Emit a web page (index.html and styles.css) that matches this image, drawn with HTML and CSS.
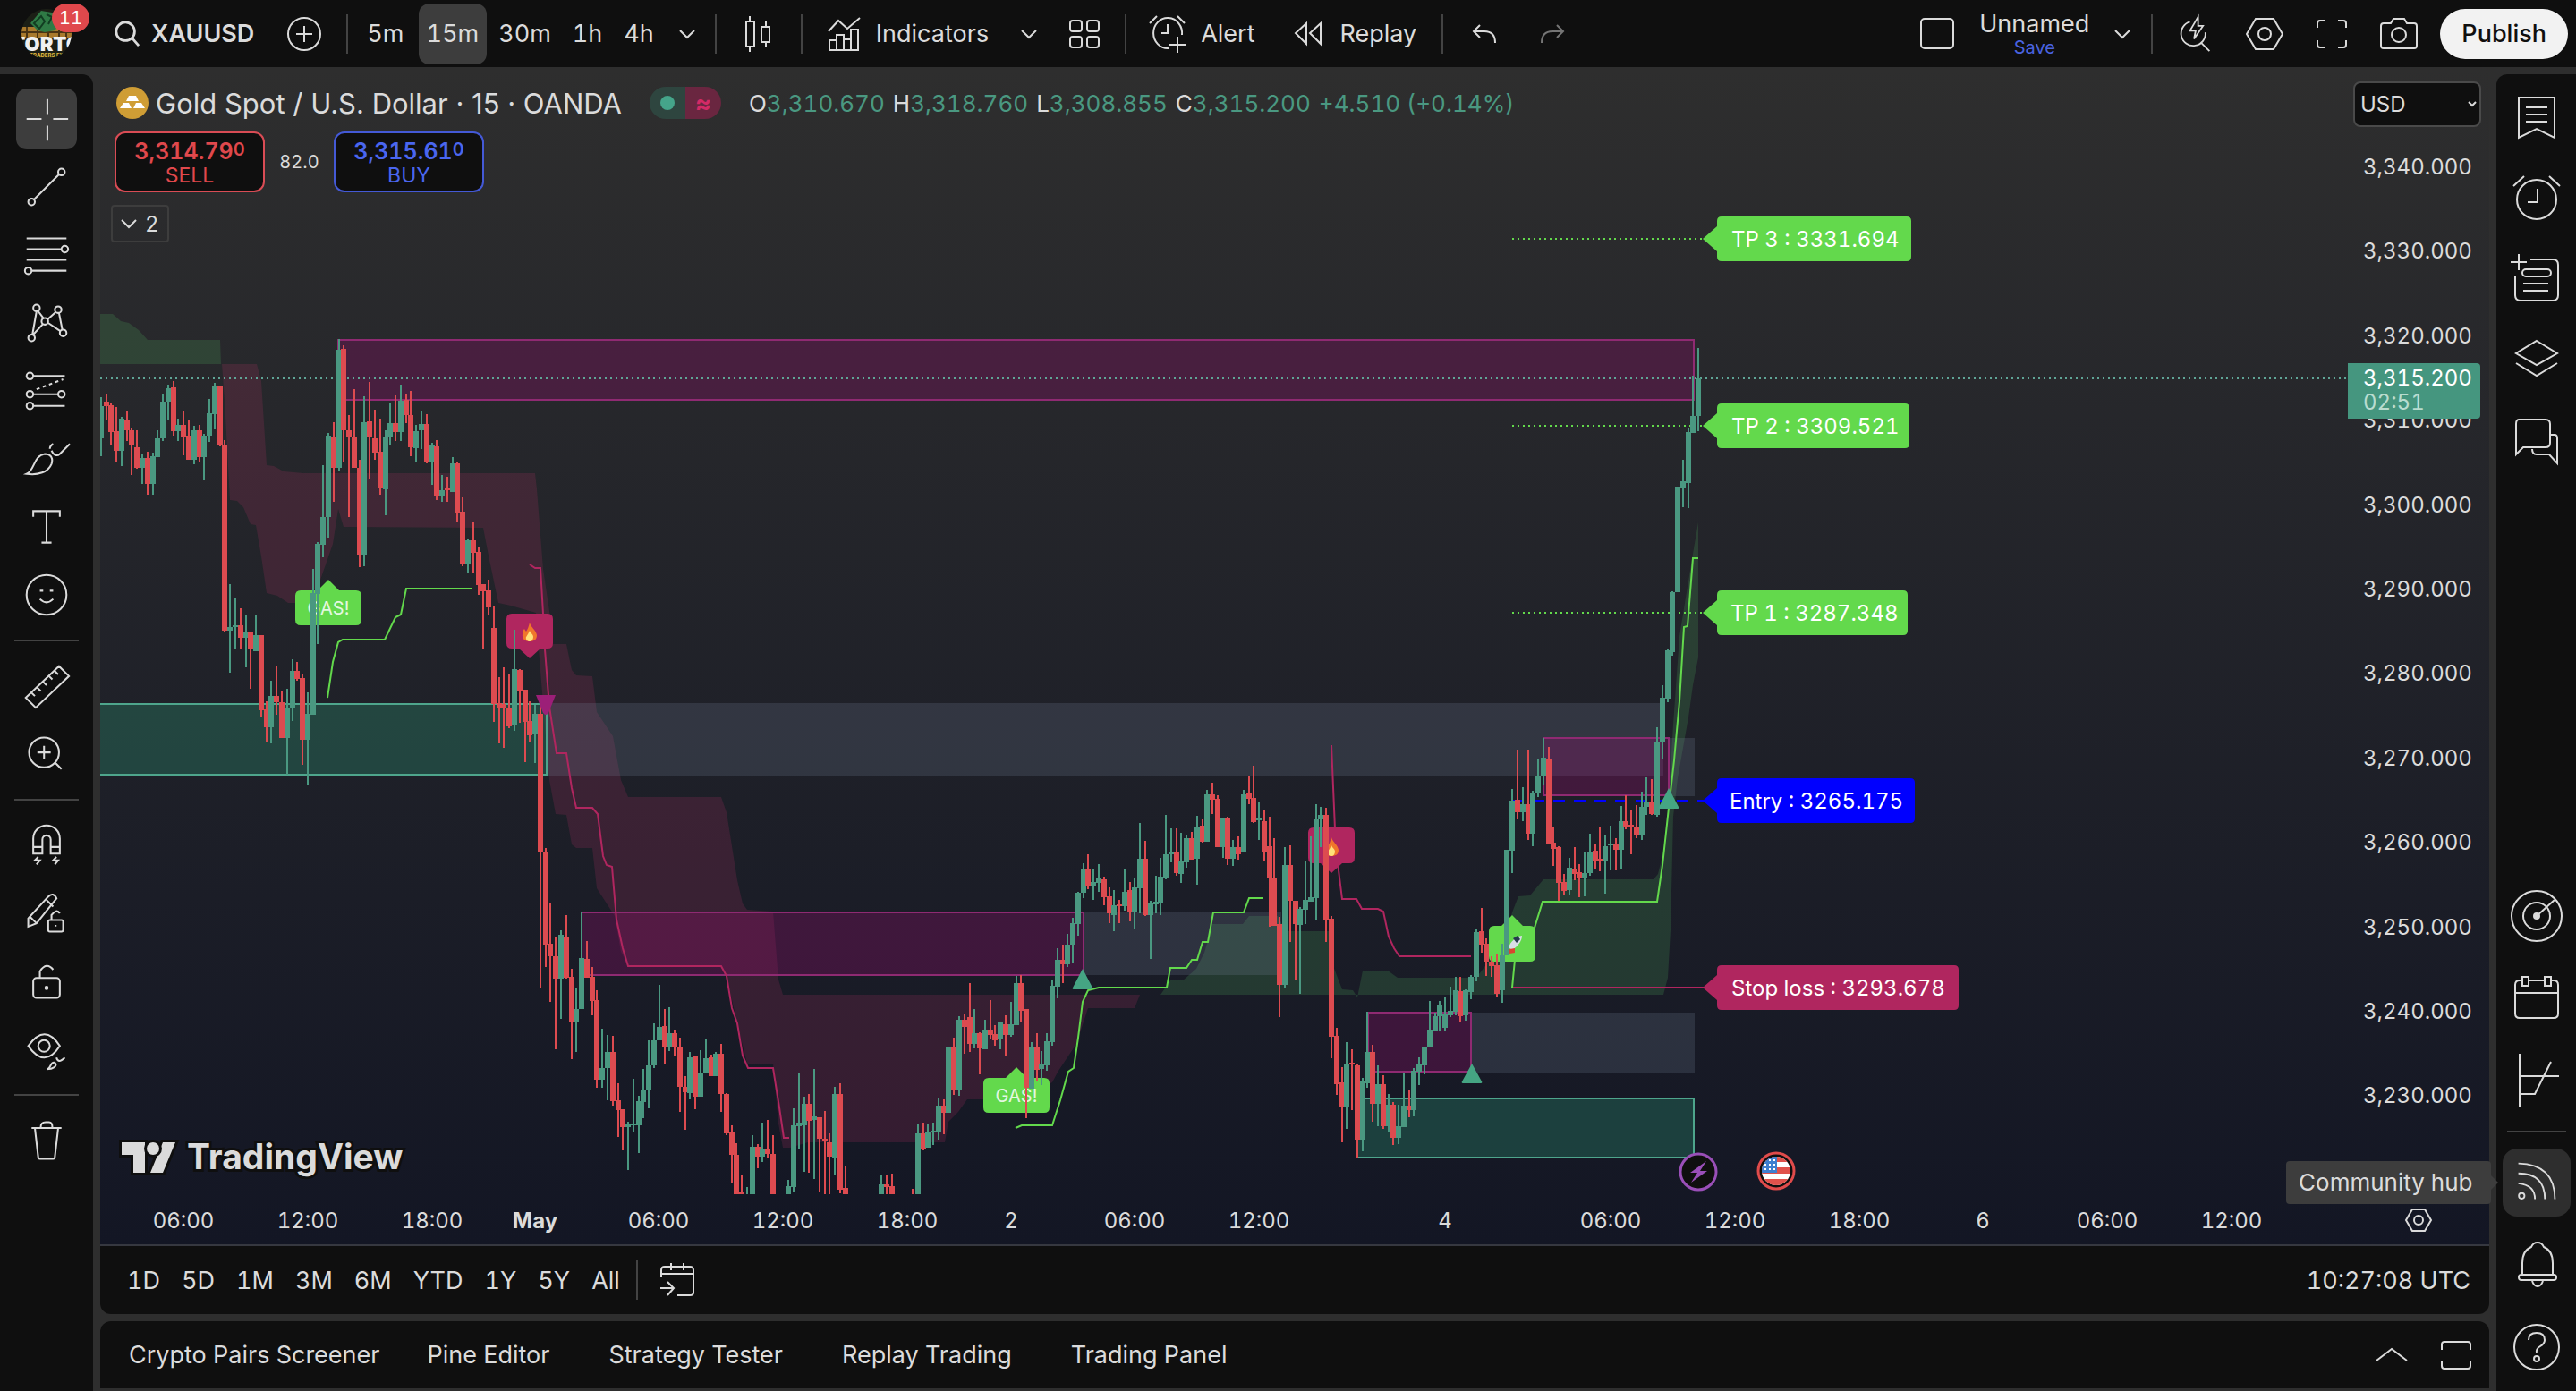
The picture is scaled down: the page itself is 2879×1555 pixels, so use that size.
FILE: index.html
```html
<!DOCTYPE html>
<html lang="en">
<head>
    <meta charset="UTF-8">
    <meta name="viewport" content="width=device-width, initial-scale=1.0">
    <title>XAUUSD 3,315.200</title>
    <link rel="stylesheet" href="styles.css">
</head>
<body>
    <header class="topbar">
        <button class="avatar" aria-label="Profile">
            <svg viewBox="0 0 56 56" class="avatarImg">
                <clipPath id="avatarClip"><circle cx="28" cy="28" r="28"/></clipPath>
                <g clip-path="url(#avatarClip)">
                    <rect width="56" height="56" fill="#1c1f16"/>
                    <path d="M0 20h56v12H0z" fill="#a8792c"/>
                    <path d="M6 20v14M18 20v14M30 20v14M42 20v14M50 20v14M0 26h56" stroke="#4a3414" stroke-width="2"/>
                    <path d="M10 16L22 2l12 2 8 8-4 12-12 2-8-2z" fill="#2f7a45"/>
                    <path d="M14 16l8-8 4 6-6 8zM28 6l6 3-4 8" fill="none" stroke="#123d22" stroke-width="2"/>
                    <text x="28" y="47" class="avatarName">TORTO</text>
                    <text x="28" y="54" class="avatarSub">TRADERS FX</text>
                </g>
            </svg>
            <span class="badge">11</span>
        </button>
        <button class="symbol">
            <svg class="icon28" viewBox="0 0 28 30"><circle cx="12" cy="12" r="11"/><path d="M20 20l8 9"/></svg>
            XAUUSD
        </button>
        <button class="addSymbol" aria-label="Compare">
            <svg class="icon38" viewBox="0 0 38 38"><circle cx="19" cy="19" r="18"/><path d="M19 10v18M10 19h18"/></svg>
        </button>
        <i class="sep"></i>
        <nav class="intervals">
            <button>5m</button>
            <button class="active">15m</button>
            <button>30m</button>
            <button>1h</button>
            <button>4h</button>
            <button class="chev" aria-label="More intervals"><svg class="icon18" viewBox="0 0 18 18"><path d="M1 5l8 8 8-8"/></svg></button>
        </nav>
        <i class="sep"></i>
        <button class="tb candlesBtn" aria-label="Candles">
            <svg class="icon40" viewBox="0 0 40 40"><path d="M6 6h9v28H6zM10 0v6M10 34v6M23 12h9v17h-9zM28 6v6M28 29v6"/></svg>
        </button>
        <i class="sep"></i>
        <button class="tb indicators">
            <svg class="icon38" viewBox="0 0 38 38"><path d="M1 16L12 4l10 9L36 1M2 37V26h8v11M10 37V20h8v17M18 37V25h8v12M26 37V14h8v23zM2 37h32"/></svg>
            Indicators
        </button>
        <button class="chev indChev" aria-label="Favorites"><svg class="icon18" viewBox="0 0 18 18"><path d="M1 5l8 8 8-8"/></svg></button>
        <button class="tb" aria-label="Templates">
            <svg class="icon34" viewBox="0 0 34 34"><rect x="1" y="2" width="13" height="12" rx="3"/><rect x="20" y="2" width="13" height="12" rx="3"/><rect x="1" y="20" width="13" height="12" rx="3"/><rect x="20" y="20" width="13" height="12" rx="3"/></svg>
        </button>
        <i class="sep"></i>
        <button class="tb alert">
            <svg class="icon42" viewBox="0 0 42 42"><path d="M22 37A16 17 0 1 1 37 22M21 10v10h-7M1 9l8-8M32 1l8 8M32 24v18M23 33h18"/></svg>
            Alert
        </button>
        <button class="tb replay">
            <svg class="icon32" viewBox="0 0 32 32"><path d="M14 4v23L2 15zM30 4v23L18 15z"/></svg>
            Replay
        </button>
        <i class="sep"></i>
        <button class="tb undo" aria-label="Undo"><svg class="icon28" viewBox="0 0 28 28"><path d="M9 4L2 11l7 7M2 11h12c8 0 12 5 12 13"/></svg></button>
        <button class="tb redo" aria-label="Redo"><svg class="icon28" viewBox="0 0 28 28"><path d="M19 4l7 7-7 7M26 11H14C6 11 2 16 2 24"/></svg></button>

        <div class="topRight">
            <button class="tb" aria-label="Layout"><svg class="icon38" viewBox="0 0 38 38"><rect x="1" y="2" width="36" height="33" rx="4"/></svg></button>
            <button class="layoutName"><span>Unnamed</span><small>Save</small></button>
            <button class="chev layoutChev" aria-label="Layouts"><svg class="icon18" viewBox="0 0 18 18"><path d="M1 5l8 8 8-8"/></svg></button>
            <i class="sep"></i>
            <button class="tb quick" aria-label="Quick search"><svg class="icon40" viewBox="0 0 40 44"><path d="M14 7A15 15 0 1 0 33 20M27 32l11 11M24 1L14 18h7l-2 10 11-16h-6z"/></svg></button>
            <button class="tb" aria-label="Settings"><svg class="icon42" viewBox="0 0 42 40"><path d="M11 3h20l10 17-10 17H11L1 20z"/><circle cx="21" cy="20" r="7"/></svg></button>
            <button class="tb" aria-label="Fullscreen"><svg class="icon34" viewBox="0 0 34 34"><path d="M1 10V5q0-3 3-3h6M24 2h6q3 0 3 3v5M33 24v5q0 3-3 3h-6M10 32H4q-3 0-3-3v-5"/></svg></button>
            <button class="tb" aria-label="Snapshot"><svg class="icon42" viewBox="0 0 42 40"><path d="M4 8h8l3-5h12l3 5h8q3 0 3 3v22q0 3-3 3H4q-3 0-3-3V11q0-3 3-3z"/><circle cx="21" cy="21" r="8"/></svg></button>
            <button class="publish">Publish</button>
        </div>
    </header>

    <main class="workspace">
        <aside class="tools">
            <button class="active" aria-label="Cross"><svg viewBox="0 0 28 28"><path d="M2 14h9M18 14h9M14.500 2v9M14.500 18v9"/></svg></button>
            <button aria-label="Trend line"><svg viewBox="0 0 28 28"><circle cx="5" cy="23" r="2"/><circle cx="23" cy="5" r="2"/><path d="M6.500 21.500l15-15"/></svg></button>
            <button aria-label="Fib"><svg viewBox="0 0 28 28"><path d="M2 4h24M2 10.500h21M2 17h24M5 23.500h21"/><circle cx="25" cy="10.500" r="2"/><circle cx="3" cy="23.500" r="2"/></svg></button>
            <button aria-label="Patterns"><svg viewBox="0 0 28 28"><circle cx="5" cy="23" r="2"/><circle cx="8" cy="5" r="2"/><circle cx="13" cy="13" r="2"/><circle cx="21" cy="6" r="2"/><circle cx="24" cy="20" r="2"/><path d="M5.500 21L8 7M9 7l3 4M6 21l6-6.500M14.500 12l5-4.500M21.500 8l2 10M15 14l7.500 5"/></svg></button>
            <button aria-label="Forecast"><svg viewBox="0 0 28 28"><circle cx="4" cy="5" r="2"/><circle cx="4" cy="16" r="2"/><circle cx="4" cy="23" r="2"/><circle cx="23" cy="16" r="2"/><path d="M6 5h19M6 16h15M6 23h19"/><path stroke-dasharray="2 2" d="M8 13l16-6"/></svg></button>
            <button aria-label="Brush"><svg viewBox="0 0 28 28"><path d="M2 23c5-2 4-11 11-12 4 0 5 3 4 6-2 5-8 7-15 6zM16 8q0-2 2-3M17 9c2 4 4 3 5 2l6-6"/></svg></button>
            <button aria-label="Text"><svg viewBox="0 0 28 28"><path d="M6 8V4.500h16V8M14 4.500v19M11 23.500h6"/></svg></button>
            <button aria-label="Icons"><svg viewBox="0 0 28 28"><circle cx="14" cy="14" r="12"/><path d="M10 16.500q4 4 8 0M10 11.500h2M16 11.500h2"/></svg></button>
            <hr>
            <button aria-label="Measure"><svg viewBox="0 0 28 28"><path d="M1.500 21L21.500 2l6 6-20 19zM5 18l2 2M8.500 15l2 2M12 11.500l2 2M15.500 8l2 2M19 5l2 2"/></svg></button>
            <button aria-label="Zoom"><svg viewBox="0 0 28 28"><circle cx="12.500" cy="13" r="9"/><path d="M19 19l4 4M12.500 9v8M8.500 13h8"/></svg></button>
            <hr>
            <button aria-label="Magnet"><svg viewBox="0 0 28 28"><path d="M6 19v-9a8 8 0 0 1 16 0v9h-5.500v-8.500a2.500 2.500 0 0 0-5 0V19zM6 15h5.500M16.500 15H22M9 21l-2 2h3l-2 2.500M20 21l-2 2h3l-2 2.500"/></svg></button>
            <button aria-label="Stay in drawing mode"><svg viewBox="0 0 28 28"><path d="M3 22v-5L15 4q3-3 5 1L8 20l-5 2zM4 16l4 4M14 6l4 4"/><rect x="15" y="18" width="9" height="7" rx="1"/><path d="M17 18v-3q3-4 5-1M19.500 21v1"/></svg></button>
            <button aria-label="Lock"><svg viewBox="0 0 28 28"><rect x="6" y="12" width="16" height="12" rx="2"/><path d="M10 12V8q4-6 8-1"/><circle cx="14" cy="18" r=".7"/></svg></button>
            <button aria-label="Hide"><svg viewBox="0 0 28 28"><path d="M3 12q10-14 19 0-9 14-19 0z"/><circle cx="12.500" cy="12" r="3.500"/><path d="M14 26c3 0 2-5 5-4 2 2-1 4-5 4zM20 19q1 4 5 0"/></svg></button>
            <hr>
            <button aria-label="Delete"><svg viewBox="0 0 28 28"><path d="M5 6.500h18M7 6.500L9 24q0 1 1 1h8q1 0 1-1l2-17.500M10.500 6q0-3 3-3h2q2 0 2 3"/></svg></button>
        </aside>

        <section class="center">
            <div class="chart">
                <svg class="plot" viewBox="112 76 2670 1315">
                    <clipPath id="paneClip"><rect x="112" y="76" width="2512" height="1259"/></clipPath>
                    <!-- clouds -->
                    <path class="cloudUp" d="M112 351L126 351 135 359 144 361 155 369 165 380 246 380 247 407 112 407z"/>
                    <path class="cloudDown" d="M248 407L287 407 292 426 298 520 306 521 317 527 339 529 598 529 600 547 607 636 614 683 618 720 633 720 639 749 644 755 662 756 667 796 685 823 694 872 702 891 806 891 812 908 824 984 830 1010 835 1017 864 1019 870 1095 875 1112 1274 1112 1268 1127 1216 1127 1203 1167 1183 1197 1176 1210 1140 1229 1081 1229 1071 1243 1060 1254 1056 1277 903 1277 883 1283 875 1283 870 1256 864 1189 835 1189 824 1144 812 1091 806 1080 702 1080 694 1064 687 1024 667 993 662 948 644 948 639 944 633 911 621 910 614 872 602 725 599 685 571 677 557 674 547 626 540 590 384 589 378 569 372 608 356 654 339 674 322 674 310 666 298 663 292 622 286 587 280 586 272 567 265 560 257 559 251 447z"/>
                    <path class="cloudUp" d="M1297 1112L1308 1096 1322 1096 1337 1083 1346 1065 1355 1033 1389 1033 1396 1024 1428 1024 1437 1041 1485 1041 1490 1080 1500 1106 1512 1107 1517 1115 1523 1085 1551 1085 1562 1093 1650 1093 1665 1073 1680 1060 1690 1020 1697 1002 1710 1001 1725 983 1848 983 1853 977 1862 940 1870 810 1877 711 1892 619 1898 584 1898 735 1892 766 1887 802 1875 870 1870 913 1867 1040 1864 1093 1859 1112z"/>
                    <!-- supply / demand zones -->
                    <rect class="used" x="611" y="786" width="1248" height="81"/>
                    <rect class="used" x="1211" y="1020" width="221" height="70"/>
                    <rect class="used" x="1644" y="1132" width="250" height="67"/>
                    <rect class="used" x="1865" y="825" width="29" height="65"/>
                    <rect class="supply" x="378" y="380" width="1515" height="67"/>
                    <rect class="supply" x="650" y="1020" width="561" height="70"/>
                    <rect class="supply" x="1529" y="1132" width="115" height="66"/>
                    <rect class="supply" x="1725" y="825" width="140" height="64"/>
                    <path class="demand" d="M112 787H611V866H112"/>
                    <rect class="demand" x="1517" y="1228" width="376" height="66"/>
                    <path class="lastLine" d="M112 423H2624"/>
                    <path class="tpLine" d="M1690 267H1905M1690 476H1905M1690 685H1905"/>
                    <path class="entryLine" d="M1690 895H1905"/>
                    <path class="stopLine" d="M1690 1104H1905"/>
                    <!-- trailing stop -->
                    <path class="trailDown" d="M592 631L598 635 604 635 607 686 609 726 614 790 622 842 633 842 639 881 644 903 662 903 668 910 674 957 678 967 684 969 689 1028 696 1060 702 1080 806 1080 812 1091 818 1127 824 1144 830 1180 836 1194 864 1194 871 1238 876 1272 882 1272"/>
                    <path class="trailDown" d="M1488 833L1492 927 1496 973 1500 1005 1516 1005 1522 1016 1540 1016 1546 1019 1552 1047 1558 1060 1564 1069 1644 1069"/>
                    <path class="trailUp" d="M366 780L372 740 378 718 383 715 430 715 442 690 448 687 454 658 528 658"/>
                    <path class="trailUp" d="M1135 1261L1142 1258 1176 1258 1185 1230 1194 1198 1200 1194 1205 1160 1210 1120 1216 1107 1228 1104 1304 1104 1308 1082 1326 1082 1332 1073 1338 1073 1344 1053 1350 1053 1356 1020 1390 1020 1396 1004 1412 1004"/>
                    <path class="trailUp" d="M1690 1104L1693 1073 1715 1037 1724 1008 1852 1008 1858 967 1865 903 1871 850 1877 784 1882 701 1886 700 1892 624 1898 624"/>
                    <!-- signal labels -->
                    <g class="signalUp">
                        <path d="M336 660h19l12-12 12 12h19q6 0 6 6v27q0 6-6 6h-62q-6 0-6-6v-27q0-6 6-6z"/>
                        <path d="M1105 1205h19l12-12 12 12h19q6 0 6 6v27q0 6-6 6h-62q-6 0-6-6v-27q0-6 6-6z"/>
                        <path d="M1670 1035h8l12-12 12 12h8q6 0 6 6v28q0 6-6 6h-40q-6 0-6-6v-28q0-6 6-6z"/>
                        <text x="367" y="687">GAS!</text>
                        <text x="1136" y="1232">GAS!</text>
                    </g>
                    <g class="signalDown">
                        <path d="M572 686h40q6 0 6 6v27q0 6-6 6h-8l-12 11-12-11h-8q-6 0-6-6v-27q0-6 6-6z"/>
                        <path d="M1468 925h40q6 0 6 6v28q0 6-6 6h-8l-12 11-12-11h-8q-6 0-6-6v-28q0-6 6-6z"/>
                    </g>
                    <g id="flame">
                        <path fill="#f0762b" d="M592 696c1 5 7 8 8 14 0 5-3 7-8 7s-9-3-8-8c0-3 1-5 2-6l2 3c2-3 3-6 4-10z"/>
                        <path fill="#ffe27a" d="M592 705c1 3 4 4 4 7s-2 5-4 5-5-2-4-5c1-1 1-2 2-3z"/>
                    </g>
                    <use href="#flame" x="896" y="240"/>
                    <g>
                        <path fill="#d9dee6" d="M1686 1059c2-6 8-12 15-13 0 6-5 12-11 16z"/>
                        <path fill="#26394e" d="M1691 1049l5-3 3 4-4 4z"/>
                        <path fill="#d8452f" d="M1687 1061l6-1v5l-6 1z"/>
                    </g>
                    <g id="candles" clip-path="url(#paneClip)"></g>
                    <path fill="#9c1f78" d="M599 777h22l-8 20q-3 4-6 0z"/>
                    <path class="arrowUp" d="M1210 1083l11 21q1 2-1 2h-20q-2 0-1-2zM1645 1189l11 20q1 2-1 2h-20q-2 0-1-2zM1865 881l11 21q1 2-1 2h-20q-2 0-1-2z"/>
                    <!-- trade levels -->
                    <g fill="#63d94c">
                        <path d="M1903 267l16-14v-6q0-5 5-5h207q5 0 5 5v40q0 5-5 5h-207q-5 0-5-5v-6z"/>
                        <path d="M1903 476l16-14v-6q0-5 5-5h205q5 0 5 5v40q0 5-5 5h-205q-5 0-5-5v-6z"/>
                        <path d="M1903 685l16-14v-6q0-5 5-5h203q5 0 5 5v40q0 5-5 5h-203q-5 0-5-5v-6z"/>
                    </g>
                    <path fill="#0000ff" d="M1903 895l16-14v-6q0-5 5-5h211q5 0 5 5v40q0 5-5 5h-211q-5 0-5-5v-6z"/>
                    <path fill="#b0265f" d="M1903 1104l16-14v-6q0-5 5-5h260q5 0 5 5v40q0 5-5 5h-260q-5 0-5-5v-6z"/>
                    <g class="levelText">
                        <text x="1935" y="276">TP 3 : 3331.694</text>
                        <text x="1935" y="485">TP 2 : 3309.521</text>
                        <text x="1934" y="694">TP 1 : 3287.348</text>
                        <text x="1933" y="904">Entry : 3265.175</text>
                        <text x="1935" y="1113">Stop loss : 3293.678</text>
                    </g>
                    <!-- events -->
                    <circle cx="1898" cy="1310" r="20" fill="#0f0f0f" stroke="#9a4fb8" stroke-width="3"/>
                    <path fill="#9a4fb8" d="M1907 1298l-18 13h8l-7 11 18-13h-8z"/>
                    <circle cx="1985" cy="1309" r="20" fill="#0f0f0f" stroke="#e04b4b" stroke-width="3"/>
                    <clipPath id="flagClip"><circle cx="1985" cy="1309" r="16"/></clipPath>
                    <g clip-path="url(#flagClip)">
                        <path fill="#fff" d="M1968 1292h34v34h-34z"/>
                        <path fill="#e0524c" d="M1968 1292h34v7h-34zM1968 1305h34v7h-34zM1968 1318h34v8h-34z"/>
                        <path fill="#3f7fd0" d="M1968 1292h18v19h-18z"/>
                        <path stroke="#fff" stroke-width="2" stroke-dasharray="2 3" d="M1972 1297h14M1972 1302h14M1972 1307h14"/>
                    </g>
                    <!-- logo -->
                    <g class="logo">
                        <path d="M136 1277h26v34h-13v-20h-13zM182 1277h14l-14 34h-14z"/>
                        <circle cx="171" cy="1284" r="7"/>
                        <text x="209" y="1307">TradingView</text>
                    </g>
                    <g id="priceAxis"></g>
                    <path fill="#45967f" d="M2624 406h144q4 0 4 4v54q0 4-4 4h-144z"/>
                    <g class="axis">
                        <text x="2641" y="431" fill="#fff">3,315.200</text>
                        <text x="2641" y="458" fill="#b9dccf">02:51</text>
                    </g>
                    <g id="timeAxis"></g>
                    <path fill="none" stroke="#dbdbdb" stroke-width="2" d="M2696 1352h14l7 12-7 12h-14l-7-12z"/>
                    <circle cx="2703" cy="1364" r="5" fill="none" stroke="#dbdbdb" stroke-width="2"/>
                </svg>

                <div class="legend">
                    <div class="legendRow">
                        <svg class="gold" viewBox="0 0 36 36"><circle cx="18" cy="18" r="18" fill="#cf9d35"/><path fill="#fff" d="M14 10h8l3 6H11zM8 18h6l3 6H4zM22 18h6l4 6H19z"/></svg>
                        <span class="title">Gold Spot / U.S. Dollar · 15 · OANDA</span>
                        <span class="status"><i class="open"><b></b></i><i class="approx">≈</i></span>
                        <span class="ohlc">
                            <span>O<em>3,310.670</em></span>
                            <span>H<em>3,318.760</em></span>
                            <span>L<em>3,308.855</em></span>
                            <span>C<em>3,315.200</em></span>
                            <em>+4.510 (+0.14%)</em>
                        </span>
                    </div>
                    <div class="trade">
                        <button class="sell"><b>3,314.79<sup>0</sup></b><span>SELL</span></button>
                        <span class="spread">82.0</span>
                        <button class="buy"><b>3,315.61<sup>0</sup></b><span>BUY</span></button>
                    </div>
                    <button class="collapse"><svg class="icon18" viewBox="0 0 18 18"><path d="M1 5l8 8 8-8"/></svg>2</button>
                </div>
                <select class="currency" aria-label="Currency"><option>USD</option></select>
            </div>
            <div class="ranges">
                <button>1D</button>
                <button>5D</button>
                <button>1M</button>
                <button>3M</button>
                <button>6M</button>
                <button>YTD</button>
                <button>1Y</button>
                <button>5Y</button>
                <button>All</button>
                <i class="sep"></i>
                <button aria-label="Go to"><svg class="icon40" viewBox="0 0 40 40"><path d="M2 17V9q0-4 4-4h28q4 0 4 4v25q0 3-4 3H20M2 13h36M13 1v8M27 1v8M1 29h14M9 22l7 7-7 8"/></svg></button>
                <button class="clock">10:27:08 UTC</button>
            </div>
            <footer class="panels">
                <button class="screener">Crypto Pairs Screener</button>
                <button>Pine Editor</button>
                <button>Strategy Tester</button>
                <button>Replay Trading</button>
                <button>Trading Panel</button>
                <div class="panelCtl">
                    <button aria-label="Open panel"><svg class="icon38" viewBox="0 0 38 38"><path d="M2 25l17-13 17 13"/></svg></button>
                    <button aria-label="Maximize panel"><svg class="icon34" viewBox="0 0 34 34"><path d="M1 11V5q0-3 3-3h26q3 0 3 3v6M1 23v6q0 3 3 3h26q3 0 3-3v-6"/></svg></button>
                </div>
            </footer>
        </section>

        <aside class="widgets">
            <button aria-label="Watchlist"><svg viewBox="0 0 28 28"><path d="M4 2.500h20V25l-10-5-10 5zM8 8h12M8 12h12M8 16h12"/></svg></button>
            <button aria-label="Alerts"><svg viewBox="0 0 28 28"><circle cx="14" cy="14.500" r="11"/><path d="M14.500 8.500V16H9M1 7l6-5.500M27 7l-6-5.500"/></svg></button>
            <button aria-label="Object tree"><svg viewBox="0 0 28 28"><path d="M10.500 3H23q3 0 3 3v17q0 3-3 3H5q-3 0-3-3V12M4 0v9M-.500 4.500h9M6.500 16.500h14M6.500 20.500h14"/><rect x="6" y="8.500" width="16" height="4" rx="2"/></svg></button>
            <button aria-label="Layers"><svg viewBox="0 0 28 28"><path d="M14 3.500l11.500 7L14 17 2.500 10.500zM2.500 16L14 23l11.500-7"/></svg></button>
            <button aria-label="Chats"><svg viewBox="0 0 28 28"><path d="M4 2.500h15q2.500 0 2.500 2.500v10.500q0 2.500-2.500 2.500H6.500l-4 4V5q0-2.500 1.500-2.500zM22 11h2q1.500 0 1.500 2v14l-4.500-5h-7q-2.500 0-2.500-3"/></svg></button>
            <div class="widgetsBottom">
                <button aria-label="Screeners"><svg viewBox="0 0 28 28"><circle cx="14" cy="14" r="14"/><circle cx="14" cy="14" r="7.500"/><circle cx="14" cy="14" r="1.500" fill="#dbdbdb"/><path d="M14 14L24 5"/></svg></button>
                <button aria-label="Calendars"><svg viewBox="0 0 28 28"><path d="M6 4H4.500Q2 4 2 6.500v16Q2 25 4.500 25h19q2.500 0 2.500-2.500v-16Q26 4 23.500 4H22M9.500 4h9M2 11h24M6 2h3.500v5H6zM18.500 2H22v5h-3.500z"/></svg></button>
                <button aria-label="Options"><svg viewBox="0 0 28 28"><path d="M4.500-1v30M4.500 11.500h22M4.500 21.500H13l9-18"/></svg></button>
                <hr>
                <button class="hub" aria-label="Community hub">
                    <svg viewBox="0 0 28 28"><circle cx="5" cy="22" r="1.700"/><path d="M3 14.500q10 1 10 9.500M3 8.500q16 0 16 15.500M3 2.500Q25 3 25 24"/></svg>
                    <span class="tooltip">Community hub</span>
                </button>
                <button aria-label="Notifications"><svg viewBox="0 0 28 28"><path d="M6 19.500V13q0-7 5-9 1-2.500 3.500-2.500T18 4q5 2 5 9v6.500"/><rect x="4" y="19.500" width="21" height="3" rx="1.500"/><path d="M11.500 23q1 3 3 3t3-3"/></svg></button>
                <button aria-label="Help"><svg viewBox="0 0 28 28"><circle cx="14" cy="14" r="12.500"/><path d="M9.500 10q0-4 4.500-4t4.500 4q0 2-2.500 3.500T14 17"/><circle cx="14" cy="20.500" r="1.500"/></svg></button>
            </div>
        </aside>
    </main>

    <script src="chart.js"></script>
</body>
</html>
```
FILE: styles.css
```css
* {
    box-sizing: border-box;
}
body {
    display: flex;
    flex-direction: column;

    height: 100vh;
    margin: 0;

    background-color: #2e2e2e;
    color: #dbdbdb;

    font-family: Inter, "Liberation Sans", sans-serif;
    font-size: 27px;
    font-variant-numeric: tabular-nums;

    overflow: hidden;
}
button {
    display: inline-flex;
    align-items: center;

    padding: 0;

    border: 0;
    background: none;
    color: inherit;

    font: inherit;
    font-variant-numeric: tabular-nums;
    white-space: nowrap;
}
svg {
    flex-shrink: 0;

    overflow: visible;
}
button svg {
    fill: none;
    stroke: #dbdbdb;
    stroke-width: 2;
}
.icon18 { width: 18px; height: 18px; }
.icon28 { width: 28px; height: 28px; }
.icon32 { width: 32px; height: 32px; }
.icon34 { width: 34px; height: 34px; }
.icon38 { width: 38px; height: 38px; }
.icon40 { width: 40px; height: 40px; }
.icon42 { width: 42px; height: 42px; }
.sep {
    width: 2px;
    height: 44px;

    background-color: #434343;
}

/* top bar */
.topbar {
    display: flex;
    align-items: center;
    flex-shrink: 0;

    height: 75px;
    padding: 0 9px 0 24px;

    background-color: #0f0f0f;
}
.avatar {
    position: relative;

    width: 56px;
    height: 56px;
}
.avatar .avatarImg {
    width: 56px;
    height: 56px;

    fill: none;
    stroke: none;
}
.avatarName {
    fill: #f0f0f0;

    font-size: 22px;
    font-weight: 900;
    text-anchor: middle;
}
.avatarSub {
    fill: #d9b23a;

    font-size: 6px;
    font-weight: 800;
    text-anchor: middle;
}
.badge {
    position: absolute;
    top: -6px;
    left: 34px;

    width: 42px;
    height: 32px;

    border-radius: 16px;
    background-color: #e0484c;
    color: #fff;

    font-size: 20px;
    line-height: 32px;
}
.symbol {
    gap: 13px;

    margin-left: 48px;

    font-weight: 600;
}
.symbol svg {
    stroke-width: 3;
}
.addSymbol {
    margin: 0 28px 0 37px;
}
.intervals {
    display: flex;
    align-items: center;

    padding-left: 9px;
}
.intervals button {
    justify-content: center;

    height: 68px;
    padding: 0 12px;

    border-radius: 12px;
}
.intervals .active {
    margin: 0 1px 0 4px;
    padding: 0 9px;

    background-color: #3d3d3d;
}
.intervals button.chev {
    padding: 0 22px 0 16px;
}
.candlesBtn {
    margin: 0 27px;
}
.indicators {
    gap: 16px;

    margin-left: 28px;
}
.indChev {
    margin: 0 36px;
}
.tb + .sep {
    margin-left: 28px;
}
.candlesBtn + .sep {
    margin-left: 0;
}
.alert {
    gap: 16px;

    margin-left: 25px;
}
.replay {
    gap: 19px;

    margin-left: 44px;
}
.undo {
    margin-left: 32px;
}
.redo {
    margin-left: 48px;

    opacity: .5;
}
.topRight {
    display: flex;
    align-items: center;
    gap: 37px;

    margin-left: auto;
}
.layoutName {
    flex-direction: column;

    margin-left: -9px;
}
.layoutName span {
    line-height: 30px;
}
.layoutName small {
    color: #4a63e0;

    font-size: 20px;
    line-height: 22px;
}
.layoutChev {
    margin: 0 -14px 0 -9px;
}
.quick {
    margin-left: -10px;
}
.publish {
    margin-left: -12px;
    padding: 0 24px;

    height: 56px;

    border-radius: 28px;
    background-color: #f2f2f2;
    color: #0f0f0f;

    font-weight: 500;
}

/* columns under the top bar */
.workspace {
    display: grid;
    grid-template-columns: 104px minmax(0, 1fr) 89px;
    gap: 8px;
    flex: 1;

    min-height: 0;
    padding-top: 1px;
}
.tools,
.widgets {
    display: flex;
    flex-direction: column;
    align-items: center;

    margin-top: 7px;

    background-color: #0f0f0f;
}
.tools {
    padding-top: 16px;

    border-radius: 0 12px 0 0;
}
.tools button {
    justify-content: center;

    width: 68px;
    height: 68px;
    margin: 0 0 8px;

    border-radius: 12px;
}
.tools button.active {
    background-color: #3d3d3d;
}
.tools svg {
    width: 52px;
    height: 52px;

    stroke-width: 1.100;
}
.tools hr,
.widgets hr {
    width: 72px;
    height: 2px;
    margin: 8px 0 16px;

    border: 0;
    background-color: #434343;
}
.widgets {
    padding-top: 4px;

    border-radius: 12px 0 0 0;
}
.widgets button {
    position: relative;
    justify-content: center;

    width: 76px;
    height: 76px;
    margin: 7px 0;

    border-radius: 16px;
}
.widgets svg {
    width: 56px;
    height: 56px;

    stroke-width: 1;
}
.widgetsBottom {
    display: flex;
    flex-direction: column;
    align-items: center;

    margin-top: auto;
    padding-bottom: 3px;
}
.widgetsBottom button {
    margin: 8px 0;
}
.widgets hr {
    width: 66px;
    margin: 10px 0;
}
.widgets .hub {
    background-color: #2e2e2e;
}
.hub svg {
    width: 52px;
    height: 52px;
}
.tooltip {
    position: absolute;
    top: 14px;
    right: 89px;

    padding: 0 20px 0 14px;

    border-radius: 4px;
    background-color: #3d3d3d;

    font-size: 26px;
    line-height: 48px;
}
.tooltip::after {
    content: "";

    position: absolute;
    top: 16px;
    right: -8px;

    border: 8px solid transparent;
    border-right-width: 0;
    border-left-color: #3d3d3d;
}

/* chart */
.center {
    display: flex;
    flex-direction: column;

    min-height: 0;
}
.chart {
    position: relative;
    flex: 1;

    min-height: 0;

    background: linear-gradient(#2e2e2e, #131624);
}
.plot {
    display: block;

    width: 100%;
    height: 100%;
}
.cloudUp { fill: rgba(80, 180, 95, .2); }
.cloudDown { fill: rgba(210, 55, 110, .17); }
.used { fill: rgba(120, 130, 155, .22); }
.supply {
    fill: rgba(148, 13, 110, .3);
    stroke: #8f2a72;
    stroke-width: 2;
}
.demand {
    fill: rgba(45, 150, 115, .32);
    stroke: #4ea58c;
    stroke-width: 2;
}
.lastLine {
    stroke: #5fa596;
    stroke-width: 2;
    stroke-dasharray: 2 4;
}
.tpLine {
    stroke: #63d94c;
    stroke-width: 2;
    stroke-dasharray: 2 4;
}
.entryLine {
    stroke: #0000ff;
    stroke-width: 2;
    stroke-dasharray: 13 10;
}
.stopLine {
    stroke: #b0265f;
    stroke-width: 2;
}
.trailDown,
.trailUp {
    fill: none;
    stroke: #b0265f;
    stroke-width: 2;
}
.trailUp {
    stroke: #63d94c;
}
.signalUp {
    fill: #63d94c;
}
.signalUp text {
    fill: #e4f7e0;

    font-size: 20px;
    text-anchor: middle;
}
.signalDown {
    fill: #b0265f;
}
.up { fill: #4a9881; }
.down { fill: #dd4b50; }
.arrowUp { fill: #45a583; }
.levelText {
    fill: #fff;

    font-size: 24px;
}
.axis {
    fill: #dbdbdb;

    font-size: 24px;
}
.axis .bold {
    font-weight: 700;
}
.time {
    text-anchor: middle;
}
.logo {
    fill: #dbdbdb;
    stroke: #0f0f0f;
    stroke-width: 6;
    paint-order: stroke;
}
.logo text {
    font-size: 39px;
    font-weight: 700;
}
.legend {
    position: absolute;
    top: 15px;
    left: 12px;
}
.legendRow {
    display: flex;
    align-items: center;

    height: 48px;
    margin-left: 6px;
}
.gold {
    width: 36px;
    height: 36px;
}
.title {
    margin: 0 31px 0 8px;

    font-size: 31px;
    font-variant-numeric: normal;
}
.status {
    display: flex;

    width: 80px;
    height: 36px;

    border-radius: 18px;

    overflow: hidden;
}
.status i {
    display: flex;
    align-items: center;
    justify-content: center;

    width: 40px;

    background-color: #2e453f;

    font-style: normal;
}
.status b {
    width: 16px;
    height: 16px;

    border-radius: 8px;
    background-color: #45a58a;
}
.status .approx {
    background-color: #6a2640;
    color: #d42a66;

    font-weight: 700;
}
.ohlc {
    display: flex;
    gap: 9px;

    margin-left: 31px;

    font-size: 26px;
}
.ohlc em {
    color: #4a9881;

    font-style: normal;
}
.trade {
    display: flex;
    align-items: center;

    margin: 8px 0 14px 4px;
}
.trade button {
    flex-direction: column;
    justify-content: center;

    width: 168px;
    height: 68px;
    padding-top: 4px;

    border: 2px solid #d94c55;
    border-radius: 12px;
    background-color: #0f0f0f;
    color: #e0484c;

    font-size: 23px;
    line-height: 27px;
}
.trade .buy {
    border-color: #4459d6;
    color: #4a66f0;
}
.trade b {
    font-size: 25px;
    font-weight: 600;
}
.trade sup {
    font-size: 20px;
    line-height: 0;
    vertical-align: 4px;
}
.spread {
    width: 77px;

    font-size: 20px;
    text-align: center;
}
.collapse {
    gap: 9px;

    height: 42px;
    padding: 0 9px;

    border: 2px solid #3d3d3d;
    border-radius: 4px;

    font-size: 24px;
}
.currency {
    position: absolute;
    top: 15px;
    right: 9px;

    width: 143px;
    height: 51px;
    padding: 0 2px;

    border: 2px solid #4a4a4a;
    border-radius: 8px;
    background-color: #0f0f0f;
    color: #dbdbdb;

    font-family: inherit;
    font-size: 24px;
}

/* bottom bars */
.ranges {
    display: flex;
    align-items: center;
    gap: 24px;

    height: 78px;
    padding: 0 21px 0 30px;

    border-top: 2px solid #363840;
    border-radius: 0 0 12px 12px;
    background-color: #0f0f0f;
}
.ranges .sep {
    margin-left: -6px;
}
.clock {
    margin-left: auto;
}
.panels {
    display: flex;
    align-items: center;
    gap: 66px;

    height: 75px;
    margin: 8px 0 3px;
    padding: 0 20px 0 32px;

    border-radius: 12px 12px 0 0;
    background-color: #0f0f0f;
}
.screener {
    margin-right: -13px;
}
.panelCtl {
    display: flex;
    gap: 36px;

    margin-left: auto;
}
```
FILE: chart.js
```js
const NS = "http://www.w3.org/2000/svg";

// every block: index of its first bar, top edge, ticks per unit
// bar: [open, high, low, close], measured down from the top edge
const blocks = [
    { from: 0, top: 340, unit: 2.8, bars: [
        [420,290,475,320],[305,280,360,318],[316,308,442,400],[398,322,496,458],[458,352,506,358],[364,332,428,396],
        [396,388,535,440],[448,395,515,512],[512,468,563,482],[482,462,596,562],[562,466,596,476],[478,395,478,420],
        [420,280,428,305],[306,252,363,263],[260,240,412,397],[397,357,428,378],[379,332,472,413],[412,362,487,487],
        [487,382,500,395],[395,378,493,480],[480,406,552,412],[412,298,430,342],[344,245,392,258],[256,255,445,442],
        [440,425,1025,1022],[1022,877,1153,1010],[1012,918,1080,1004],[1004,952,1080,1044],[1043,974,1138,1028],[1026,1026,1203,1077],
        [1085,974,1085,1036],[1036,1036,1290,1270],[1268,1243,1368,1324],[1324,1180,1374,1226],[1226,1134,1284,1246],[1246,1212,1357,1357],
        [1357,1204,1472,1262],[1262,1112,1306,1148],[1148,1120,1180,1172],[1170,1156,1441,1363],[1363,1215,1505,1283],[1284,828,1284,904],
        [906,745,1063,750],[752,504,791,666],[667,404,730,412],[413,370,619,512],[512,108,524,143],[140,130,495,395],
        [395,347,665,414],[413,266,511,511],[511,487,822,783],[783,288,820,370],[368,244,549,417],[420,330,487,464],
        [462,358,596,577],[580,396,660,417],[418,308,441,372],[373,286,428,400],[400,252,428,302],[300,283,372,348],
        [347,272,475,448],[450,378,496,398],[396,336,453,374],[375,344,498,495],[496,434,566,443],[445,426,612,598],
        [599,534,618,582],[577,540,618,582],[587,478,587,498],[497,492,683,652],[650,604,820,815],[815,734,842,739],
        [739,683,842,778],[776,762,909,878],[876,875,1080,898],[895,862,973,948],[1014,946,1307,1252],[1250,1168,1374,1262],
        [1252,1136,1388,1262],[1262,1156,1326,1322],[1316,1020,1335,1143],[1144,1143,1310,1210],[1207,1207,1434,1307],[1305,1244,1370,1350],
        [1346,1254,1436,1282]
    ] },
    { from: 85, top: 640, unit: 2.24, bars: [
        [353,330,1042,700],[698,690,988,932],[930,828,1075,962],[962,915,1194,1018],[1018,896,1118,908],[912,858,1018,1014],
        [1012,992,1218,1124],[1124,1042,1200,1092],[1094,851,1094,965],[968,922,1014,1014],[1012,988,1108,1072],[1071,1046,1291,1270],
        [1270,1142,1290,1242],[1242,1158,1322,1200],[1200,1160,1335,1324],[1322,1280,1413,1347],[1345,1343,1446,1388],[1388,1376,1496,1383],
        [1384,1268,1400,1379],[1384,1310,1453,1323],[1326,1243,1367,1297],[1298,1172,1341,1234],[1235,1128,1241,1172],[1172,1033,1172,1137],
        [1135,1092,1231,1189],[1189,1089,1198,1154],[1154,1145,1212,1189],[1188,1164,1350,1288],[1287,1262,1396,1302],[1304,1200,1320,1213],
        [1212,1210,1344,1312],[1313,1197,1313,1252],[1253,1169,1253,1216],[1215,1208,1262,1262],[1262,1200,1262,1205],[1205,1180,1350,1307],
        [1305,1304,1408,1404],[1402,1384,1530,1459],[1459,1430,1570,1570],[1553,1510,1560,1560],[1570,1538,1570,1556],[1570,1410,1570,1438],
        [1439,1432,1492,1462],[1462,1378,1477,1444],[1442,1370,1468,1456],[1456,1410,1570,1570],null,null,
        [1570,1520,1570,1537],[1538,1342,1552,1384],[1386,1254,1442,1378],[1384,1313,1500,1330],[1330,1306,1502,1372],[1370,1243,1518,1362],
        [1364,1364,1552,1418],[1417,1348,1556,1422],[1426,1405,1556,1462],[1464,1288,1508,1306],[1306,1280,1555,1546],[1541,1484,1570,1570],
        null,null,null,null,null,null,
        [1570,1510,1570,1532],[1532,1510,1556,1538],[1536,1505,1570,1570],null,null,null,
        [1570,1543,1570,1570],[1570,1382,1570,1404],[1404,1378,1446,1442],[1440,1380,1440,1403],[1402,1378,1434,1398],[1402,1316,1420,1336],
        [1336,1319,1407,1352],[1352,1189,1352,1190],[1190,1165,1308,1298],[1298,1110,1310,1120],[1120,1104,1204,1138],[1113,1029,1200,1180],
        [1180,1092,1192,1154]
    ] },
    { from: 170, top: 820, unit: 3, bars: [
        [1005,1002,1142,1056],[1058,960,1058,992],[992,894,1022,1011],[1009,978,1048,1028],[1026,966,1060,968],[974,945,1082,1011],
        [1012,900,1016,975],[978,812,978,838],[838,810,969,930],[925,924,1290,1188],[1190,1036,1190,1053],[1053,1004,1163,1128],
        [1126,1064,1178,1108],[1112,1004,1130,1032],[1034,826,1048,846],[850,720,887,759],[759,708,836,774],[775,672,782,708],
        [708,618,770,636],[639,530,678,535],[535,434,551,456],[457,404,522,514],[514,456,557,499],[500,438,530,486],
        [489,480,576,548],[546,516,636,604],[609,525,663,576],[573,558,636,578],[580,456,594,530],[525,498,630,600],
        [597,486,657,516],[519,300,602,420],[421,360,612,609],[609,562,756,570],[572,477,602,564],[566,417,609,480],
        [482,273,490,405],[404,318,432,397],[396,318,476,468],[471,333,500,430],[432,342,450,351],[351,330,423,423],
        [420,276,507,312],[309,288,366,363],[363,189,363,204],[204,164,270,222],[219,207,381,381],[381,282,417,285],
        [285,279,441,420],[420,357,444,381],[381,345,423,405],[399,189,399,204],[201,141,237,219],[216,108,300,297],
        [291,228,357,286],[294,255,429,399],[378,279,648,486],[483,351,645,645],[639,615,950,843],[843,381,852,441],
        [441,375,699,561],[562,561,828,640],[642,583,873,588],[591,426,639,558],[564,345,564,550],[552,237,624,288],
        [288,246,381,273],[273,249,699,624],[621,612,1089,1017],[1014,987,1212,1176],[1170,1119,1371,1251],[1251,1035,1326,1110],
        [1104,1059,1263,1110],[1113,1110,1425,1362],[1362,1155,1400,1167],[1173,933,1188,1068],[1068,1044,1302,1242],[1242,1113,1317,1176],
        [1176,1146,1326,1317],[1317,1209,1335,1245],[1245,1236,1380,1356],[1356,1245,1377,1317],[1320,1137,1320,1248],[1248,1197,1287,1263],
        [1263,1122,1284,1131],[1134,1086,1179,1110],[1112,1050,1142,1051],[1053,897,1053,993],[998,936,998,948],[948,897,996,909],
        [987,882,999,942]
    ] },
    { from: 261, top: 800, unit: 3, bars: [
        [1004,908,1010,990],[993,877,1004,922],[924,877,1028,1007],[1004,918,1022,921],[926,870,950,876],[876,714,890,726],
        [723,645,795,767],[765,747,872,825],[824,808,876,840],[838,800,945,933],[922,766,962,803],[805,450,805,450],
        [452,246,528,285],[282,114,348,324],[323,240,353,297],[297,114,416,395],[396,252,437,258],[261,144,272,201],
        [204,75,233,141],[144,106,429,429],[426,375,503,446],[441,438,622,560],[558,530,601,588],[585,478,601,510],
        [513,441,553,532],[525,498,608,545],[545,459,605,528],[528,396,538,456],[453,430,515,489],[481,373,521,486],
        [486,399,597,438],[435,369,518,429],[432,411,518,450],[449,303,512,353],[353,267,380,372],[367,318,465,372],
        [372,300,410,402],[402,255,418,306],[307,207,332,292],[291,213,333,330],[333,39,339,87]
    ] },
    { from: 302, top: 380, unit: 1.633, bars: [
        [733,630,765,654],[655,565,662,567],[570,459,577,461],[461,268,461,268],[270,219,305,258],[262,162,307,168],
        [170,65,170,138],[138,15,166,70]
    ] }
];

const FIRST_X = 112.8;
const STEP = 5.778;

function addRect(parent, x, y, width, height) {
    const rect = document.createElementNS(NS, "rect");
    rect.setAttribute("x", x);
    rect.setAttribute("y", y);
    rect.setAttribute("width", width);
    rect.setAttribute("height", height);
    parent.appendChild(rect);
}

function addText(parent, x, y, text, className) {
    const node = document.createElementNS(NS, "text");
    node.setAttribute("x", x);
    node.setAttribute("y", y);
    if (className) node.setAttribute("class", className);
    node.textContent = text;
    parent.appendChild(node);
}

const candles = document.getElementById("candles");

for (const block of blocks) {
    block.bars.forEach(function (bar, i) {
        if (!bar) return;
        const [open, high, low, close] = bar.map(v => Math.round(block.top + v / block.unit));
        const x = Math.round(FIRST_X + STEP * (block.from + i));
        const group = document.createElementNS(NS, "g");
        group.setAttribute("class", bar[3] < bar[0] ? "up" : "down");
        addRect(group, x - 1, high, 2, low - high);
        addRect(group, x - 3, Math.min(open, close), 6, Math.max(2, Math.abs(close - open)));
        candles.appendChild(group);
    });
}

const priceAxis = document.getElementById("priceAxis");
priceAxis.setAttribute("class", "axis");
for (let i = 0; i < 12; i++) {
    const price = 3340 - i * 10;
    addText(priceAxis, 2641, Math.round(195 + i * 94.4), "3," + String(price).slice(1) + ".000");
}

const times = [
    [205, "06:00"], [344, "12:00"], [483, "18:00"], [598, "May"], [736, "06:00"], [875, "12:00"],
    [1014, "18:00"], [1130, "2"], [1268, "06:00"], [1407, "12:00"], [1615, "4"], [1800, "06:00"],
    [1939, "12:00"], [2078, "18:00"], [2216, "6"], [2355, "06:00"], [2494, "12:00"]
];
const timeAxis = document.getElementById("timeAxis");
timeAxis.setAttribute("class", "axis time");
for (const [x, label] of times) {
    addText(timeAxis, x, 1373, label, label === "May" ? "bold" : "");
}
```
